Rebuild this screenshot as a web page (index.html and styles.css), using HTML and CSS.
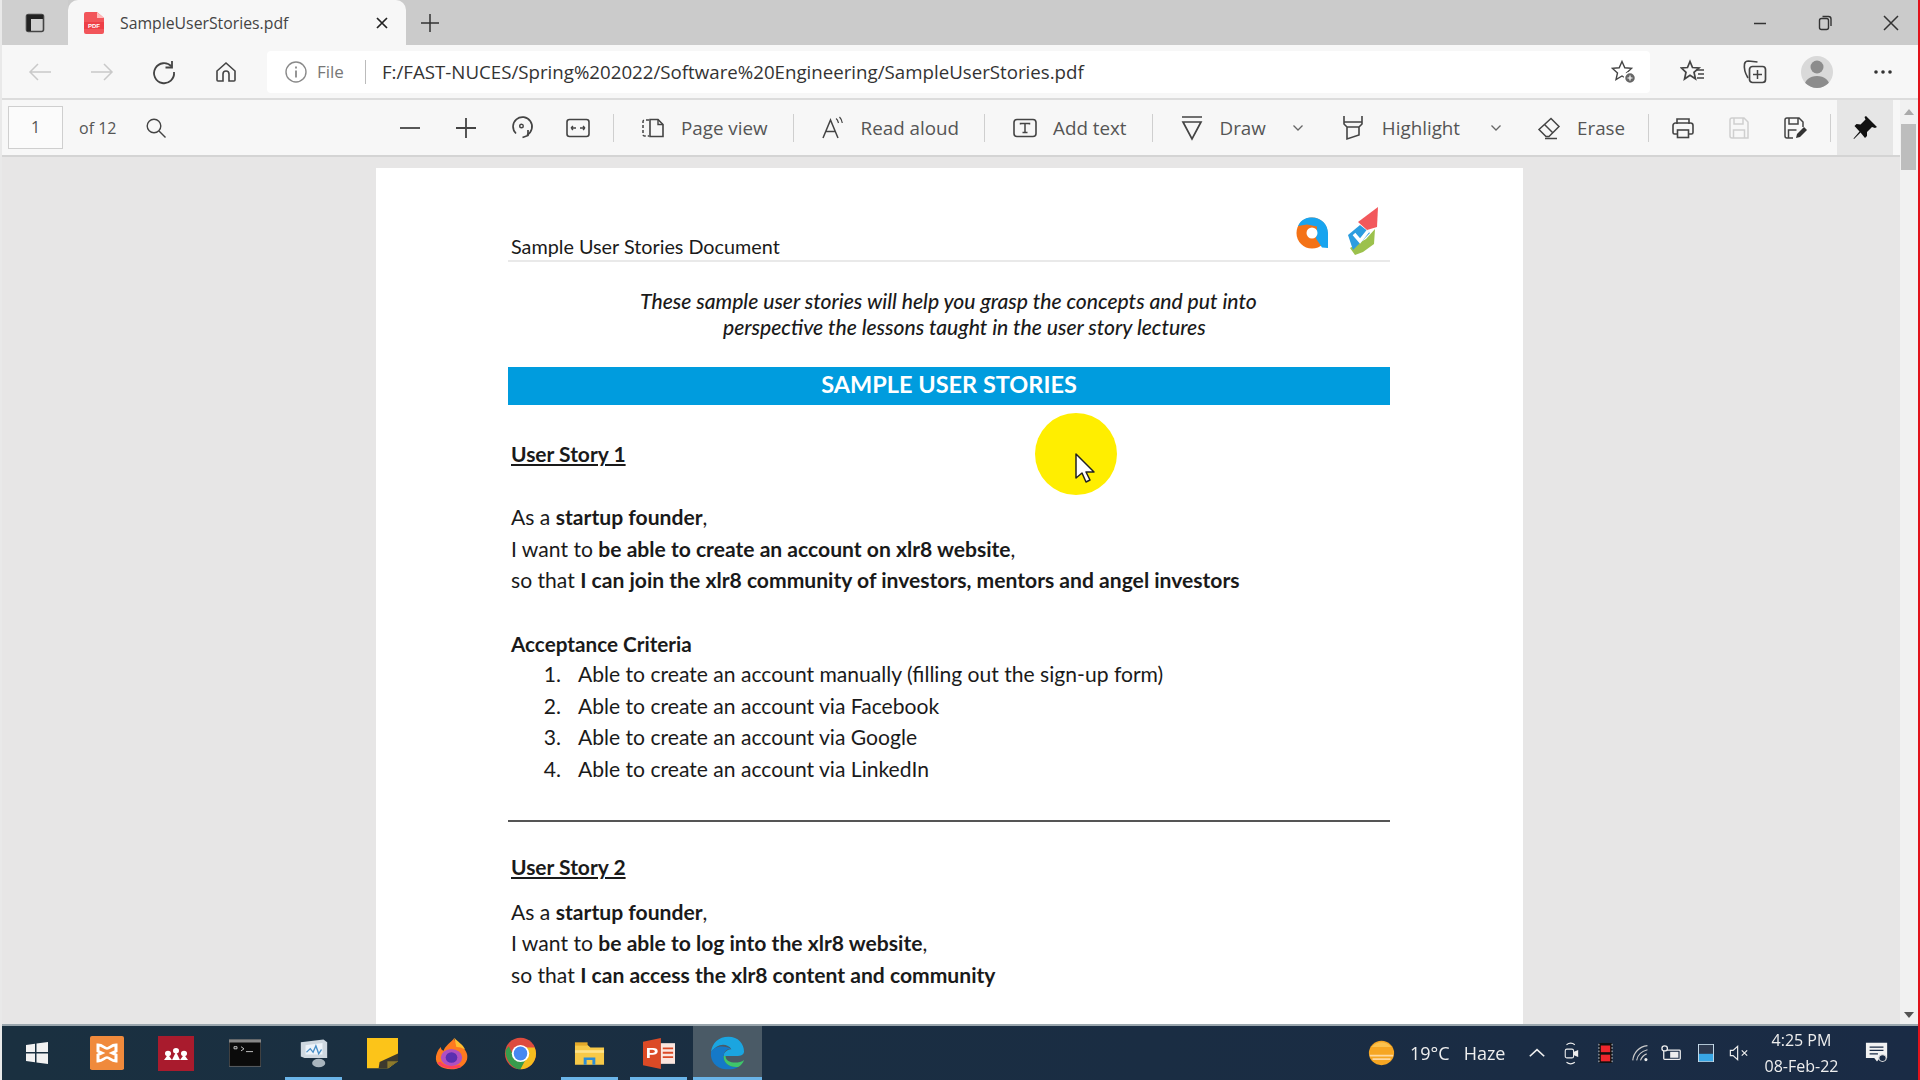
FILE: index.html
```html
<!DOCTYPE html>
<html lang="en">

<head>
    <meta charset="UTF-8">
    <title>SampleUserStories.pdf</title>
    <link rel="stylesheet" href="styles.css">
</head>

<body>
    <div class="app">
        <!-- tabs -->
        <div class="tabstrip">
            <div class="tabside">
                <svg class="ico" width="24" height="24" viewBox="0 0 24 24"><rect x="3.5" y="3.5" width="17" height="17" rx="2" stroke-width="1.6"/><path d="M4 4h16v4H4zM4 8h4v12H4z" fill="#222" stroke="none"/></svg>
            </div>
            <div class="tab">
                <svg width="22" height="24" viewBox="0 0 22 24"><path d="M1 3a2 2 0 0 1 2-2h11l7 6v14a2 2 0 0 1-2 2H3a2 2 0 0 1-2-2z" fill="#f2555a"/><path d="M14 1l7 6h-7z" fill="#fbb"/><rect x="1" y="11" width="20" height="7" fill="#ee3f47"/><text x="11" y="17" class="pdf-mini">PDF</text></svg>
                <span class="tabtitle">SampleUserStories.pdf</span>
                <svg class="ico tabclose" width="14" height="14" viewBox="0 0 14 14"><path d="M2 2l10 10M12 2L2 12" stroke="#222" stroke-width="1.7"/></svg>
            </div>
            <svg class="ico newtab" width="22" height="22" viewBox="0 0 22 22"><path d="M11 2v18M2 11h18" stroke="#333" stroke-width="1.5"/></svg>
            <div class="winbtns">
                <svg class="ico" width="16" height="16" viewBox="0 0 16 16"><path d="M2 8.5h12" stroke="#333" stroke-width="1.5"/></svg>
                <svg class="ico" width="16" height="18" viewBox="0 0 16 18"><rect x="2.5" y="4.500" width="9" height="11" rx="2" stroke="#333" stroke-width="1.4"/><path d="M5.500 2.500h6a2.500 2.500 0 0 1 2.500 2.500v7" stroke="#333" stroke-width="1.4"/></svg>
                <svg class="ico" width="18" height="18" viewBox="0 0 18 18"><path d="M2 2l14 14M16 2L2 16" stroke="#333" stroke-width="1.5"/></svg>
            </div>
        </div>

        <!-- address bar -->
        <div class="navbar">
            <div class="navbtn">
                <svg class="ico dim" width="26" height="22" viewBox="0 0 26 22"><path d="M24 11H3M11 3l-8 8 8 8"/></svg>
            </div>
            <div class="navbtn">
                <svg class="ico dim" width="26" height="22" viewBox="0 0 26 22"><path d="M2 11h21M15 3l8 8-8 8"/></svg>
            </div>
            <div class="navbtn">
                <svg class="ico" width="26" height="26" viewBox="0 0 26 26"><path d="M20.500 7.500A10 10 0 1 0 23 13" stroke-width="1.8"/><path d="M21 2v6.500h-6.500" stroke-width="1.8"/></svg>
            </div>
            <div class="navbtn">
                <svg class="ico" width="24" height="24" viewBox="0 0 24 24"><path d="M3 11l9-8 9 8v9a1 1 0 0 1-1 1h-5v-7a3 3 0 0 0-6 0v7H4a1 1 0 0 1-1-1z" stroke-width="1.6"/></svg>
            </div>
            <div class="addressbox">
                <svg class="ico dim2" width="24" height="24" viewBox="0 0 24 24"><circle cx="12" cy="12" r="10"/><path d="M12 10.500v7M12 6.500v2" stroke-width="1.8"/></svg>
                <span class="fileword">File</span>
                <span class="addrsep"></span>
                <span class="url">F:/FAST-NUCES/Spring%202022/Software%20Engineering/SampleUserStories.pdf</span>
                <svg class="ico favadd" width="26" height="26" viewBox="0 0 26 26"><path d="M11 2.500l2.800 6.300 6.700.6-5 4.500 1.500 6.600-6-3.500-6 3.500 1.500-6.600-5-4.500 6.700-.6z" stroke-width="1.4"/><circle cx="19" cy="19" r="5.500" fill="#666" stroke="#fff" stroke-width="1.5"/><path d="M19 16.500v5M16.500 19h5" stroke="#fff" stroke-width="1.2"/></svg>
            </div>
            <div class="navright">
                <svg class="ico" width="26" height="26" viewBox="0 0 26 26"><path d="M10 2.500l2.500 6 6.500.5-5 4.300 1.500 6.500-5.500-3.500L4.500 20 6 13.300 1.500 9 7.500 8.500z" stroke-width="1.7"/><path d="M17 11h7M18 15h6M17 19h7" stroke-width="1.5"/></svg>
                <svg class="ico" width="26" height="28" viewBox="0 0 26 28"><path d="M6 20C3 15 2 9 2.500 6c.3-2 2-3 4-3l9 1" stroke-width="1.6"/><rect x="7.500" y="8.500" width="16" height="16" rx="3" stroke-width="1.7"/><path d="M15.500 12v9M11 16.500h9" stroke-width="1.5"/></svg>
                <div class="avatar">
                    <svg width="32" height="32" viewBox="0 0 32 32"><circle cx="16" cy="11" r="6.500" fill="#8c8c8c"/><path d="M3 32c0-8 6-12 13-12s13 4 13 12z" fill="#8c8c8c"/></svg>
                </div>
                <svg class="dots" width="20" height="6" viewBox="0 0 20 6"><circle cx="3" cy="3" r="1.800" fill="#333"/><circle cx="10" cy="3" r="1.800" fill="#333"/><circle cx="17" cy="3" r="1.800" fill="#333"/></svg>
            </div>
        </div>

        <!-- pdf toolbar -->
        <div class="pdfbar">
            <div class="pagebox">1</div>
            <span class="pagecount">of 12</span>
            <div class="iconbtn">
                <svg class="ico" width="22" height="22" viewBox="0 0 22 22"><circle cx="9" cy="9" r="6.800"/><path d="M14 14l6.500 6.500"/></svg>
            </div>
            <div class="iconbtn zoomout">
                <svg class="ico" width="22" height="22" viewBox="0 0 22 22"><path d="M1 11h20" stroke-width="1.8"/></svg>
            </div>
            <div class="iconbtn">
                <svg class="ico" width="22" height="22" viewBox="0 0 22 22"><path d="M1 11h20M11 1v20" stroke-width="1.8"/></svg>
            </div>
            <div class="iconbtn">
                <svg class="ico" width="24" height="26" viewBox="0 0 24 26"><path d="M6 18.500A9.500 9.500 0 1 1 17 20" stroke-width="1.7"/><path d="M18 15v5.500l-5.500 2" stroke-width="1.7"/><circle cx="11.500" cy="11" r="1.800" stroke-width="1.4"/></svg>
            </div>
            <div class="iconbtn">
                <svg class="ico" width="24" height="20" viewBox="0 0 24 20"><rect x="1" y="1.500" width="22" height="17" rx="2.500" stroke-width="1.6"/><path d="M5 10h5M5 10l2-2M5 10l2 2M19 10h-5M19 10l-2-2M19 10l-2 2" stroke-width="1.3"/></svg>
            </div>
            <span class="sep sepfirst"></span>
            <div class="textbtn">
                <svg class="ico" width="24" height="20" viewBox="0 0 24 20"><path d="M8 2H3.500A1.500 1.500 0 0 0 2 3.500v13A1.500 1.500 0 0 0 3.500 18H8" stroke-width="1.5" stroke-dasharray="3 2"/><path d="M9 1.500h8l5 5v12H9z" stroke-width="1.6"/><path d="M17 1.500v5h5" stroke-width="1.4"/></svg>
                <span>Page view</span>
            </div>
            <span class="sep"></span>
            <div class="textbtn">
                <svg class="ico" width="24" height="24" viewBox="0 0 24 24"><path d="M2 22L9.500 4l7.500 18M5 15.500h9.500" stroke-width="1.5"/><path d="M15 2.500c1.500 1 2 2.500 2.500 4.500M18.500 1c1.500 1.500 2.500 3.500 2.800 6" stroke-width="1.2"/></svg>
                <span>Read aloud</span>
            </div>
            <span class="sep"></span>
            <div class="textbtn addbtn">
                <svg class="ico" width="24" height="20" viewBox="0 0 24 20"><rect x="1" y="1.500" width="22" height="17" rx="3" stroke-width="1.6"/><path d="M7.500 6.500V5.500h9v1M12 5.500v9M9.500 14.500h5" stroke-width="1.5"/></svg>
                <span>Add text</span>
            </div>
            <span class="sep"></span>
            <div class="textbtn drawbtn">
                <svg class="ico" width="24" height="26" viewBox="0 0 24 26"><path d="M2 2h20M3 7h18l-9 17z" stroke-width="1.7"/></svg>
                <span>Draw</span>
                <svg class="ico chev" width="12" height="8" viewBox="0 0 12 8"><path d="M1.500 1.500L6 6l4.500-4.500" stroke="#666" stroke-width="1.3"/></svg>
            </div>
            <div class="textbtn hlbtn">
                <svg class="ico" width="22" height="26" viewBox="0 0 22 26"><path d="M2 1v8l3 3h12l3-3V1M2 7h18M5 12v12l12-4v-8" stroke-width="1.6"/></svg>
                <span>Highlight</span>
                <svg class="ico chev" width="12" height="8" viewBox="0 0 12 8"><path d="M1.500 1.500L6 6l4.500-4.500" stroke="#666" stroke-width="1.3"/></svg>
            </div>
            <div class="textbtn erasebtn">
                <svg class="ico" width="24" height="24" viewBox="0 0 24 24"><path d="M14 2.500l8 8-10 10H9l-7-7zM7.500 8.500l8 8M8 22.500h12" stroke-width="1.5"/></svg>
                <span>Erase</span>
            </div>
            <span class="sep"></span>
            <div class="iconbtn printbtn">
                <svg class="ico" width="24" height="24" viewBox="0 0 24 24"><path d="M6 8V3h12v5M6 18H3.500A1.500 1.500 0 0 1 2 16.500v-7A2.500 2.500 0 0 1 4.500 7h15A2.500 2.500 0 0 1 22 9.500v7a1.500 1.500 0 0 1-1.500 1.500H18" stroke-width="1.6"/><rect x="6.500" y="14" width="11" height="7.500" stroke-width="1.6"/></svg>
            </div>
            <div class="iconbtn">
                <svg class="ico light" width="22" height="24" viewBox="0 0 22 24"><path d="M2 4a2 2 0 0 1 2-2h12l4 4v16H4a2 2 0 0 1-2-2zM6 2v6h9V2M5.500 22v-8h11v8" stroke-width="1.5"/></svg>
            </div>
            <div class="iconbtn">
                <svg class="ico" width="24" height="24" viewBox="0 0 24 24"><path d="M10 22H4a2 2 0 0 1-2-2V4a2 2 0 0 1 2-2h12l4 4v5M6 2v6h9V2M5.500 22v-8h8" stroke-width="1.5"/><path d="M13 22l1-4 7-7 3 3-7 7z" fill="#333" stroke="none"/></svg>
            </div>
            <span class="sep seplast"></span>
            <div class="pinbox">
                <svg width="26" height="26" viewBox="0 0 26 26"><path d="M14 1l11 11-2 1-3-1-5 5 0 4-2 2-4.500-5.500L2 24l-.5-.5 6-7L2.500 11l2-2 4 .5 5-5-1-2.500z" fill="#111"/></svg>
            </div>
        </div>

        <!-- document -->
        <div class="viewer">
            <div class="page">
                <div class="dochead">
                    <span>Sample User Stories Document</span>
                    <svg class="doclogo" width="92" height="52" viewBox="0 0 92 52">
                        <circle cx="22" cy="28" r="15.500" fill="#f47216"/>
                        <path d="M8 21C11 14 17 12.500 22 12.500c9 0 16 7 16 15.500v15l-6-.5-6-9 1-12-10-2z" fill="#18a4ef"/>
                        <circle cx="22" cy="28" r="5.500" fill="#fff"/>
                        <path d="M88 2L87 22 77 25 68 17z" fill="#f2585c"/>
                        <path d="M65 50L60 43 76 34 85 24 84 39 73 47z" fill="#9cc14c"/>
                        <path d="M58 30L70 20 80 28 63 45z" fill="#2b9de0"/>
                        <path d="M64 29L70 36 78 26" fill="none" stroke="#fff" stroke-width="3.500"/>
                    </svg>
                </div>
                <p class="intro">These sample user stories will help you grasp the concepts and put into<br><span class="intro2">perspective the lessons taught in the user story lectures</span></p>
                <h1 class="banner">SAMPLE USER STORIES</h1>

                <h2 class="storytitle">User Story 1</h2>
                <p class="storytext">As a <b>startup founder</b>,<br>I want to <b>be able to create an account on xlr8 website</b>,<br>so that <b>I can join the xlr8 community of investors, mentors and angel investors</b></p>
                <h3 class="criteria">Acceptance Criteria</h3>
                <ol class="criterialist">
                    <li>Able to create an account manually (filling out the sign-up form)</li>
                    <li>Able to create an account via Facebook</li>
                    <li>Able to create an account via Google</li>
                    <li>Able to create an account via LinkedIn</li>
                </ol>
                <hr class="storyrule">
                <h2 class="storytitle second">User Story 2</h2>
                <p class="storytext">As a <b>startup founder</b>,<br>I want to <b>be able to log into the xlr8 website</b>,<br>so that <b>I can access the xlr8 content and community</b></p>
            </div>

            <div class="highlight"></div>
            <svg class="cursor" width="22" height="32" viewBox="0 0 22 32"><path d="M2 2v24l6-5 4 9 4-2-4-8h8z" fill="#fff" stroke="#222" stroke-width="1.5" stroke-linejoin="round"/></svg>
        </div>

        <!-- scrollbar sits over toolbar and viewer -->
        <div class="scrollbar">
            <span class="arrowup"></span>
            <span class="thumb"></span>
            <span class="arrowdown"></span>
        </div>

        <!-- taskbar -->
        <div class="taskbar">
            <div class="tb-app startbtn">
                <svg width="24" height="24" viewBox="0 0 24 24"><path d="M1 4l9-1.300V11H1zM11.500 2.500L23 1v10H11.500zM1 12.500h9v8.800l-9-1.300zM11.500 12.500H23V23l-11.500-1.600z" fill="#f2f2f2"/></svg>
            </div>
            <div class="tb-app">
                <svg width="34" height="34" viewBox="0 0 34 38" preserveAspectRatio="none"><rect width="34" height="38" rx="2" fill="#f08a3c"/><path d="M8 10c5 0 6 4 9 4s4-4 9-4v7l-4 2 4 2v7c-5 0-6-4-9-4s-4 4-9 4v-7l4-2-4-2z" fill="none" stroke="#fff" stroke-width="3"/></svg>
            </div>
            <div class="tb-app">
                <svg width="36" height="35" viewBox="0 0 36 38" preserveAspectRatio="none"><rect width="36" height="38" fill="#a91b2d"/><circle cx="18" cy="16" r="3" fill="#fff"/><circle cx="10" cy="19" r="3" fill="#fff"/><circle cx="26" cy="19" r="3" fill="#fff"/><path d="M6 26l4-6 4 6zM14 26l4-9 4 9zM22 26l4-6 4 6z" fill="#fff"/></svg>
            </div>
            <div class="tb-app">
                <svg width="32" height="28" viewBox="0 0 32 40" preserveAspectRatio="none"><rect y="1" width="32" height="38" fill="#0b0b0b" stroke="#777"/><rect y="1" width="32" height="4" fill="#888"/><path d="M5 11h3v3H5zM12 11l3 3-3 3M17 18h7" stroke="#ddd" fill="none"/></svg>
            </div>
            <div class="tb-app running">
                <svg width="32" height="30" viewBox="0 0 34 42" preserveAspectRatio="none"><path d="M3 6l24-4 4 4v22H7l-4-2z" fill="#cfd8e0"/><path d="M8 10l18-3v16H8z" fill="#eef4fa"/><path d="M9 20l4-5 3 5 3-9 3 11 3-6" fill="none" stroke="#4a90c8" stroke-width="1.5"/><ellipse cx="22" cy="35" rx="7" ry="6" fill="#a8b4bd"/></svg>
            </div>
            <div class="tb-app">
                <svg width="31" height="31" viewBox="0 0 32 48" preserveAspectRatio="none"><path d="M0 0h32v36L22 47H0z" fill="#fcc419"/><path d="M32 24v12L21 47H12l1-10z" fill="#3d3a2e"/><path d="M32 36L21 47V36z" fill="#8d7a2c"/></svg>
            </div>
            <div class="tb-app">
                <svg width="33" height="33" viewBox="0 0 34 50" preserveAspectRatio="none"><path d="M17 49C6 49 0 41 1 30 2 22 4 18 6 15c0 3 1 5 3 6 1-8 8-13 11-20-1 6 5 9 9 15 4 7 5 12 4 18-2 10-9 15-16 15z" fill="#ff7a1f"/><path d="M20 1c3 6 9 10 11 18-3-3-6-4-9-4z" fill="#ffbd2e"/><ellipse cx="17" cy="31" rx="11" ry="13" fill="#b14fc0"/><ellipse cx="17" cy="31" rx="6" ry="8" fill="#5a2fb0"/><path d="M4 38c4 8 14 10 22 6" fill="none" stroke="#ff3f5c" stroke-width="4"/></svg>
            </div>
            <div class="tb-app">
                <svg width="33" height="33" viewBox="0 0 34 50" preserveAspectRatio="none"><ellipse cx="17" cy="25" rx="16" ry="24" fill="#dd4b3e"/><path d="M1.500 22C2 36 9 49 17 49l7-17-14-3-5-15C3 17 1.500 20 1.500 22z" fill="#389c4c"/><path d="M17 49c9 0 16-11 16-24 0-3-.5-6-1.500-9H17l7 13z" fill="#f5bd1e"/><ellipse cx="17" cy="25" rx="9" ry="13" fill="#fff"/><ellipse cx="17" cy="25" rx="7" ry="10.500" fill="#4688f1"/></svg>
            </div>
            <div class="tb-app running">
                <svg width="31" height="25" viewBox="0 0 32 38" preserveAspectRatio="none"><path d="M1 6h13l3 4h14v26H1z" fill="#f7c948"/><rect x="1" y="2" width="13" height="5" fill="#e3a92a"/><rect x="1" y="14" width="30" height="4" fill="#fde28a"/><path d="M10 36V25h12v11h-3v-7h-6v7z" fill="#2b8cd6"/></svg>
            </div>
            <div class="tb-app running">
                <svg width="32" height="31" viewBox="0 0 34 42" preserveAspectRatio="none"><path d="M0 5l19-5v42L0 37z" fill="#dc4a26"/><rect x="19" y="7" width="15" height="28" fill="#fbe6df"/><path d="M21 14h11M21 20h11M21 26h11" stroke="#dc4a26" stroke-width="2.5"/><text x="9.500" y="27" class="ppt-letter">P</text></svg>
            </div>
            <div class="tb-app running active">
                <svg width="35" height="34" viewBox="0 0 36 44" preserveAspectRatio="none"><path d="M1 21C2 9 9 1 19 1c10 0 16 9 16 19 0 4-3 6-8 6H14c0-7 6-9 8-9-2-5-8-7-12-5-4 2-7 5-9 9z" fill="#1ba5e0"/><path d="M1 21c-1 11 5 21 15 22 4 .5 9 0 13-3-9 1-15-4-15-14 0-5 3-10 8-9-6-5-17-5-21 4z" fill="#1579c8"/><path d="M14 26c0 10 6 15 15 14 3-2 5-5 6-9-3 3-8 4-13 3-4-1-6-4-6-8z" fill="#3fc66b"/></svg>
            </div>

            <div class="tray">
                <svg class="sun" width="27" height="26" viewBox="0 0 30 30" preserveAspectRatio="none"><circle cx="15" cy="15" r="14" fill="#f6a623"/><path d="M4 8a14 14 0 0 1 22 0z" fill="#fbc24e"/><path d="M2 18h26M5 22h20" stroke="#ffd9a0" stroke-width="2"/></svg>
                <span class="temp">19°C</span>
                <span class="haze">Haze</span>
                <svg class="ico chevup" width="18" height="10" viewBox="0 0 20 12" preserveAspectRatio="none"><path d="M2 10l8-8 8 8" stroke="#eee" stroke-width="1.8"/></svg>
                <svg class="ico tray-meet" width="15" height="23" viewBox="0 0 18 26" preserveAspectRatio="none"><path d="M3 3c3-2 7-2 10 0M3 23c3 2 7 2 10 0" stroke="#eee" stroke-width="1.3"/><rect x="1.500" y="8" width="10" height="10" rx="2" stroke="#eee" stroke-width="1.3"/><path d="M12 11l5-2v8l-5-2z" fill="#eee" stroke="none"/></svg>
                <svg class="tray-gap19" width="15" height="20" viewBox="0 0 16 24" preserveAspectRatio="none"><rect x="1" width="14" height="24" fill="#111"/><rect x="3" y="3" width="10" height="8" fill="#f0262c"/><rect x="3" y="14" width="10" height="8" fill="#f0262c"/><path d="M1 1v22M15 1v22" stroke="#ddd" stroke-dasharray="2 2"/></svg>
                <svg class="ico tray-gap19" width="17" height="18" viewBox="0 0 22 22" preserveAspectRatio="none"><path d="M1 20C2 11 9 3 20 2M6 20c1-6 6-11 14-13M11 20c1-3 3-6 8-8" stroke="#ccc" stroke-width="1.5"/><circle cx="18" cy="19" r="2" fill="#eee" stroke="none"/></svg>
                <svg class="tray-batt" width="22" height="17" viewBox="0 0 24 20" preserveAspectRatio="none"><rect x="3" y="6" width="18" height="11" rx="1" fill="none" stroke="#eee" stroke-width="1.4"/><rect x="10" y="8" width="9" height="7" fill="#eee"/><circle cx="4" cy="4" r="3" fill="#1a2b45" stroke="#eee" stroke-width="1.4"/></svg>
                <svg class="tray-gap15" width="16" height="18" viewBox="0 0 17 22" preserveAspectRatio="none"><rect x=".5" y=".5" width="16" height="21" fill="#2d3a50" stroke="#cfe4f2"/><rect x="1" y="12" width="15" height="9" fill="#39a7e6"/></svg>
                <svg class="ico tray-gap15" width="20" height="16" viewBox="0 0 22 18" preserveAspectRatio="none"><path d="M1.500 6v6h3l5 4.500v-15l-5 4.500z" stroke="#eee" stroke-width="1.3"/><path d="M14 6l6 6M20 6l-6 6" stroke="#eee" stroke-width="1.3"/></svg>
                <div class="clock"><span>4:25 PM</span><span>08-Feb-22</span></div>
                <svg class="notify" width="24" height="22" viewBox="0 0 26 26" preserveAspectRatio="none"><path d="M1 1h23v18h-8l-3 4-3-4H1z" fill="#f2f2f2"/><path d="M5 6h15M5 10h15M5 14h9" stroke="#1a2b45" stroke-width="1.5"/><circle cx="19" cy="19" r="4" fill="#1a2b45" stroke="#ddd" stroke-width="1.3"/></svg>
            </div>
        </div>
    </div>
</body>

</html>
```

FILE: styles.css
```css
* {
    margin: 0;
    padding: 0;
    box-sizing: border-box;
}

html, body {
    width: 1920px;
    height: 1080px;
    overflow: hidden;
}

body {
    font-family: "Open Sans", "Noto Sans", sans-serif;
    color: #333;
    background: #f7f7f7;
}

.app {
    position: relative;
    width: 1920px;
    height: 1080px;
    display: flex;
    flex-direction: column;
    border-right: 2px solid #e2121a;
    border-left: 2px solid #e9e9e9;
    filter: blur(.4px);
}

.ico {
    fill: none;
    stroke: #444;
    stroke-width: 1.4;
    flex: none;
}

.ico.dim {
    stroke: #c9c9c9;
    stroke-width: 1.5;
}

.ico.dim2 {
    stroke: #8a8a8a;
}

.ico.light {
    stroke: #cfcfcf;
}

/* tabs */
.tabstrip {
    height: 45px;
    flex: none;
    display: flex;
    align-items: flex-end;
    background: #cbcbcb;
}

.tabside {
    width: 66px;
    height: 45px;
    display: flex;
    align-items: center;
    justify-content: center;
    background: #cfcfcf;
}

.tab {
    width: 338px;
    height: 45px;
    display: flex;
    align-items: center;
    padding: 0 17px 0 15px;
    border-radius: 10px 10px 0 0;
    background: #f7f7f7;
}

.pdf-mini {
    font: bold 6px "Liberation Sans", sans-serif;
    fill: #fff;
    text-anchor: middle;
}

.ppt-letter {
    font: bold 20px "Liberation Sans", sans-serif;
    fill: #fff;
    text-anchor: middle;
}

.tabtitle {
    margin-left: 15px;
    font-size: 15.8px;
    color: #444;
    white-space: nowrap;
}

.tabclose {
    margin-left: auto;
}

.newtab {
    align-self: center;
    margin-left: 13px;
}

.winbtns {
    margin-left: auto;
    width: 200px;
    height: 45px;
    display: flex;
    align-items: center;
    justify-content: space-between;
    padding: 0 18px 0 34px;
}

/* address bar */
.navbar {
    height: 55px;
    flex: none;
    display: flex;
    align-items: center;
    padding-left: 7px;
    background: #f7f7f7;
    border-bottom: 2px solid #dcdcdc;
}

.navbtn {
    width: 62px;
    display: flex;
    justify-content: center;
    flex: none;
}

.addressbox {
    width: 1383px;
    height: 42px;
    margin-left: 10px;
    display: flex;
    align-items: center;
    padding-left: 17px;
    border-radius: 4px;
    background: #fff;
}

.fileword {
    margin-left: 9px;
    font-size: 17px;
    color: #777;
}

.addrsep {
    width: 1px;
    height: 24px;
    margin: 0 16px 0 21px;
    background: #bbb;
}

.url {
    font-size: 18.7px;
    color: #333;
    white-space: nowrap;
}

.favadd {
    margin-left: auto;
    margin-right: 13px;
}

.navright {
    flex: 1;
    display: flex;
    align-items: center;
    padding-left: 30px;
    gap: 36px;
}

.avatar {
    width: 32px;
    height: 32px;
    border-radius: 50%;
    overflow: hidden;
    background: #d9d9d9;
    margin-left: -3px;
}

.dots {
    margin-left: 4px;
}

/* pdf toolbar */
.pdfbar {
    height: 57px;
    flex: none;
    display: flex;
    align-items: center;
    background: #f7f7f7;
    border-bottom: 2px solid #d4d4d4;
    padding-left: 6px;
    font-size: 18.8px;
    color: #555;
}

.pagebox {
    width: 55px;
    height: 43px;
    line-height: 41px;
    text-align: center;
    font-size: 16px;
    border: 1px solid #cfcfcf;
    background: #fbfbfb;
}

.pagecount {
    width: 49px;
    margin-left: 16px;
    font-size: 16px;
    white-space: nowrap;
}

.iconbtn {
    width: 56px;
    flex: none;
    display: flex;
    justify-content: center;
}

.zoomout {
    margin-left: 198px;
}

.sep {
    width: 1px;
    height: 28px;
    flex: none;
    background: #cfcfcf;
}

.sepfirst {
    margin-left: 7px;
}

.seplast {
    margin-left: 7px;
}

.textbtn {
    display: flex;
    align-items: center;
    flex: none;
    padding: 0 25px 0 27px;
    white-space: nowrap;
}

.textbtn span {
    margin-left: 16px;
}

.addbtn {
    padding-left: 28px;
}

.drawbtn {
    padding-right: 0;
}

.chev {
    margin-left: 26px;
}

.hlbtn {
    padding-right: 0;
    padding-left: 38px;
}

.hlbtn span {
    margin-left: 18px;
}

.hlbtn .chev {
    margin-left: 30px;
}

.erasebtn {
    padding: 0 23px 0 35px;
}

.printbtn {
    margin-left: 6px;
}

.pinbox {
    width: 56px;
    height: 55px;
    margin-left: 6px;
    display: flex;
    align-items: center;
    justify-content: center;
    background: #e6e6e6;
}

/* document */
.viewer {
    position: relative;
    flex: 1;
    min-height: 0;
    overflow: hidden;
    padding: 11px 0 0 374px;
    background: #e7e6e6;
}

.page {
    width: 1147px;
    height: 900px;
    padding: 0 133px 0 132px;
    background: #fff;
    font-family: Lato, "Open Sans", sans-serif;
    font-size: 21.1px;
    line-height: 31.5px;
    color: #1a1a1a;
}

.dochead {
    height: 94px;
    display: flex;
    align-items: flex-end;
    justify-content: space-between;
    padding-left: 3px;
    border-bottom: 2px solid #e9e9e9;
    font-size: 19.8px;
    line-height: 27px;
}

.doclogo {
    margin: 0 8px 3px 0;
}

.intro {
    margin-top: 26px;
    padding-left: 132px;
    font-size: 21.1px;
    font-style: italic;
    line-height: 26px;
    font-weight: 500;
}

.intro2 {
    margin-left: 83px;
}

.banner {
    height: 38px;
    margin-top: 27px;
    background: #009cde;
    color: #fff;
    text-align: center;
    font-size: 23.5px;
    font-weight: 700;
    line-height: 34px;
}

.storytitle {
    margin: 33px 0 31.5px 3px;
    font-size: 21px;
    font-weight: 700;
    line-height: 31.5px;
    text-decoration: underline;
}

.storytitle.second {
    margin: 29px 0 13px 3px;
}

.storytext {
    margin-left: 3px;
}

.criteria {
    margin: 33.5px 0 0 3px;
    font-size: 20.7px;
    font-weight: 700;
    line-height: 31.5px;
}

.criterialist {
    margin-top: -2.5px;
    list-style: none;
    counter-reset: crit;
}

.criterialist li {
    counter-increment: crit;
}

.criterialist li::before {
    content: counter(crit) ".";
    display: inline-block;
    width: 53px;
    margin-right: 17px;
    text-align: right;
}

.storyrule {
    height: 2px;
    margin-top: 36px;
    border: 0;
    background: #555;
}

.highlight {
    position: absolute;
    left: 1033px;
    top: 256px;
    width: 82px;
    height: 82px;
    border-radius: 50%;
    background: #ffee00;
}

.cursor {
    position: absolute;
    left: 1072px;
    top: 295px;
}

/* scrollbar */
.scrollbar {
    position: absolute;
    top: 100px;
    right: 0;
    bottom: 56px;
    width: 18px;
    background: #f1f1f1;
}

.arrowup, .arrowdown {
    position: absolute;
    left: 4px;
    width: 0;
    height: 0;
    border-left: 5px solid transparent;
    border-right: 5px solid transparent;
}

.arrowup {
    top: 9px;
    border-bottom: 6px solid #aaa;
}

.arrowdown {
    bottom: 6px;
    border-top: 6px solid #555;
}

.thumb {
    position: absolute;
    top: 24px;
    left: 1px;
    width: 15px;
    height: 46px;
    background: #bdbdbd;
}

/* taskbar */
.taskbar {
    height: 56px;
    flex: none;
    display: flex;
    align-items: center;
    background: linear-gradient(90deg, #1a3040, #1a2b45);
    border-top: 2px solid #9aa6ad;
    color: #eee;
}

.tb-app {
    position: relative;
    width: 69px;
    height: 54px;
    flex: none;
    display: flex;
    align-items: center;
    justify-content: center;
}

.startbtn {
    width: 70px;
}

.running::after {
    content: "";
    position: absolute;
    left: 6px;
    right: 6px;
    bottom: 0;
    height: 3px;
    background: #6ab4e8;
}

.active {
    background: #4a5a66;
}

.active::after {
    left: 0;
    right: 0;
}

.tray {
    flex: 1;
    height: 54px;
    display: flex;
    align-items: center;
    padding-left: 606px;
}

.temp {
    margin-left: 15px;
    font-size: 18px;
    white-space: nowrap;
}

.haze {
    margin-left: 14px;
    font-size: 18px;
}

.chevup {
    margin-left: 23px;
}

.tray-meet {
    margin-left: 18px;
}

.tray-gap19 {
    margin-left: 19px;
}

.tray-batt {
    margin-left: 12px;
}

.tray-gap15 {
    margin-left: 15px;
}

.clock {
    width: 92px;
    margin-left: 6px;
    display: flex;
    flex-direction: column;
    align-items: center;
    font-size: 16px;
    line-height: 26px;
}

.notify {
    margin-left: 18px;
}
```
